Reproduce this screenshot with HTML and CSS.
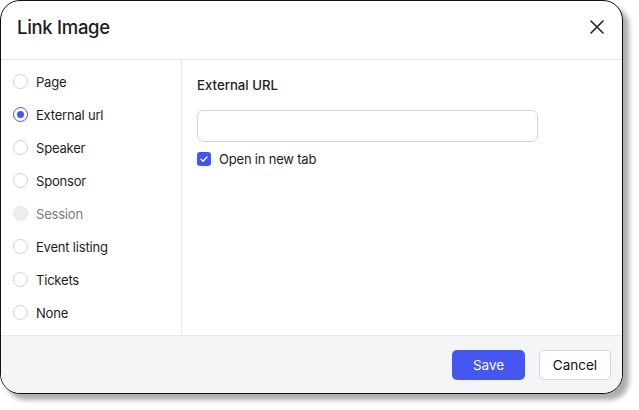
FILE: index.html
```html
<!DOCTYPE html>
<html>
<head>
<meta charset="utf-8">
<link rel="stylesheet" href="styles.css">
</head>
<body>
<div class="dialog">
  <div class="header">
    <div class="title">Link Image</div>
    <svg class="close" width="16" height="16" viewBox="0 0 16 16"><path d="M2 2L14 14M14 2L2 14" stroke="#222" stroke-width="1.6" stroke-linecap="round"/></svg>
  </div>
  <div class="main">
    <div class="sidebar">
      <div class="opt"><span class="radio"></span><span>Page</span></div>
      <div class="opt"><span class="radio on"></span><span>External url</span></div>
      <div class="opt"><span class="radio"></span><span>Speaker</span></div>
      <div class="opt"><span class="radio"></span><span>Sponsor</span></div>
      <div class="opt disabled"><span class="radio"></span><span>Session</span></div>
      <div class="opt"><span class="radio"></span><span>Event listing</span></div>
      <div class="opt"><span class="radio"></span><span>Tickets</span></div>
      <div class="opt"><span class="radio"></span><span>None</span></div>
    </div>
    <div class="content">
      <div class="label">External URL</div>
      <div class="input"></div>
      <div class="check-row">
        <span class="checkbox"><svg width="14" height="14" viewBox="0 0 14 14"><path d="M4 7.2L6 9.2L10 5" fill="none" stroke="#fff" stroke-width="1.3" stroke-linecap="round" stroke-linejoin="round"/></svg></span>
        <span>Open in new tab</span>
      </div>
    </div>
  </div>
  <div class="footer">
    <div class="btn primary">Save</div>
    <div class="btn secondary">Cancel</div>
  </div>
</div>
</body>
</html>
```
FILE: styles.css
```css
* { box-sizing: border-box; }
html, body { height: 410px; }
body {
  margin: 0;
  background: #fff;
  font-family: Inter, "Noto Sans", sans-serif;
  color: #1d1d1f;
}
.dialog {
  width: 623px;
  height: 394px;
  border: 1px solid #111;
  border-radius: 20px;
  background: #fff;
  overflow: hidden;
  display: flex;
  flex-direction: column;
  box-shadow: 6px 6px 5px rgba(0,0,0,0.32);
}
.header {
  height: 59px;
  flex: none;
  border-bottom: 1px solid #e4e5e8;
  display: flex;
  align-items: center;
  justify-content: space-between;
  padding: 0 17px 0 16px;
}
.title {
  font-size: 18.5px;
  font-weight: 500;
  letter-spacing: -0.3px;
  margin-top: -6px;
}
.close { margin-top: -6px; }
.main {
  flex: 1;
  display: flex;
  min-height: 0;
}
.sidebar {
  width: 181px;
  flex: none;
  border-right: 1px solid #e8e9ec;
  padding-top: 5px;
}
.opt {
  height: 33px;
  display: flex;
  align-items: center;
  padding-left: 12px;
  gap: 8px;
  font-size: 13px;
  letter-spacing: -0.2px;
}
.radio {
  width: 15px;
  height: 15px;
  border-radius: 50%;
  border: 1px solid #cfd2d7;
  background: #fff;
  flex: none;
  position: relative;
}
.radio.on { border-color: #4355ef; }
.radio.on::after {
  content: "";
  position: absolute;
  left: 3px; top: 3px;
  width: 7px; height: 7px;
  border-radius: 50%;
  background: #4355ef;
}
.opt.disabled { color: #7a7c80; }
.opt.disabled .radio { background: #eceef1; border-color: #e3e5e9; }
.content {
  flex: 1;
  padding: 15px 15px 0 15px;
}
.label {
  font-size: 13.2px;
  font-weight: 500;
  line-height: 20px;
}
.input {
  margin-top: 15px;
  width: 341px;
  height: 32px;
  border: 1px solid #d3d5da;
  border-radius: 6px;
}
.check-row {
  margin-top: 7px;
  height: 20px;
  display: flex;
  align-items: center;
  gap: 8px;
  font-size: 13px;
  letter-spacing: -0.2px;
}
.checkbox {
  width: 14px;
  height: 14px;
  border-radius: 3px;
  background: #4355ef;
  display: flex;
}
.footer {
  height: 58px;
  flex: none;
  background: #f4f5f7;
  border-top: 1px solid #e8e9ec;
  display: flex;
  align-items: center;
  justify-content: flex-end;
  gap: 14px;
  padding: 1px 11px 0 0;
}
.btn {
  height: 30px;
  border-radius: 5px;
  display: flex;
  align-items: center;
  justify-content: center;
  font-size: 13.5px;
}
.primary {
  width: 73px;
  background: #4656f1;
  color: #fff;
}
.secondary {
  width: 72px;
  background: #fff;
  border: 1px solid #d5d7db;
  color: #111;
}
```
